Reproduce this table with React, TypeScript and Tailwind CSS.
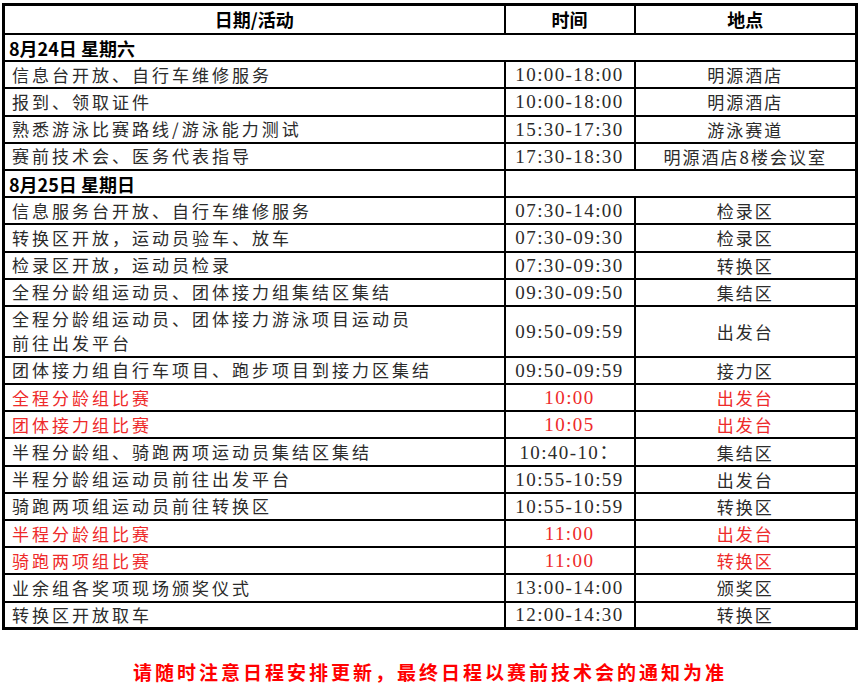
type Row = {
  act: string | string[];
  time?: string;
  place?: string;
  red?: boolean;
  date?: boolean;
  tall?: boolean;
  merge?: "all" | "right";
};

const rows: Row[] = [
  { act: "8月24日 星期六", date: true, merge: "all" },
  { act: "信息台开放、自行车维修服务", time: "10:00-18:00", place: "明源酒店" },
  { act: "报到、领取证件", time: "10:00-18:00", place: "明源酒店" },
  { act: "熟悉游泳比赛路线/游泳能力测试", time: "15:30-17:30", place: "游泳赛道" },
  { act: "赛前技术会、医务代表指导", time: "17:30-18:30", place: "明源酒店8楼会议室" },
  { act: "8月25日 星期日", date: true, merge: "right" },
  { act: "信息服务台开放、自行车维修服务", time: "07:30-14:00", place: "检录区" },
  { act: "转换区开放，运动员验车、放车", time: "07:30-09:30", place: "检录区" },
  { act: "检录区开放，运动员检录", time: "07:30-09:30", place: "转换区" },
  { act: "全程分龄组运动员、团体接力组集结区集结", time: "09:30-09:50", place: "集结区" },
  {
    act: ["全程分龄组运动员、团体接力游泳项目运动员", "前往出发平台"],
    time: "09:50-09:59",
    place: "出发台",
    tall: true,
  },
  { act: "团体接力组自行车项目、跑步项目到接力区集结", time: "09:50-09:59", place: "接力区" },
  { act: "全程分龄组比赛", time: "10:00", place: "出发台", red: true },
  { act: "团体接力组比赛", time: "10:05", place: "出发台", red: true },
  { act: "半程分龄组、骑跑两项运动员集结区集结", time: "10:40-10：", place: "集结区" },
  { act: "半程分龄组运动员前往出发平台", time: "10:55-10:59", place: "出发台" },
  { act: "骑跑两项组运动员前往转换区", time: "10:55-10:59", place: "转换区" },
  { act: "半程分龄组比赛", time: "11:00", place: "出发台", red: true },
  { act: "骑跑两项组比赛", time: "11:00", place: "转换区", red: true },
  { act: "业余组各奖项现场颁奖仪式", time: "13:00-14:00", place: "颁奖区" },
  { act: "转换区开放取车", time: "12:00-14:30", place: "转换区" },
];

const cjk = "font-['Noto_Sans_CJK_SC',sans-serif]";
const num = "font-['Liberation_Serif','Noto_Sans_CJK_SC',serif]";

export default function App() {
  return (
    <div className="w-[860px] h-[693px] bg-white overflow-hidden">
      <div className="pt-[3px] pl-[2px]">
        <table className="table-fixed border-collapse w-[856px] border-[3px] border-black">
          <colgroup>
            <col className="w-[501px]" />
            <col className="w-[130px]" />
            <col />
          </colgroup>
          <thead>
            <tr className="h-[29px]">
              <th className={`border-2 border-black text-[18px] font-bold text-black ${cjk}`}>
                日期/活动
              </th>
              <th className={`border-2 border-black text-[18px] font-bold text-black ${cjk}`}>
                时间
              </th>
              <th className={`border-2 border-black text-[18px] font-bold text-black ${cjk}`}>
                地点
              </th>
            </tr>
          </thead>
          <tbody>
            {rows.map((r, i) => {
              const color = r.red ? "text-[#ee2a2a]" : "text-[#2b2b2b]";
              const h = r.tall ? "h-[51px]" : "h-[27.2px]";
              if (r.date) {
                return (
                  <tr key={i} className={h}>
                    <td
                      colSpan={r.merge === "all" ? 3 : 1}
                      className={`border-2 border-black px-[4px] py-0 text-[18px] font-bold text-black leading-none ${cjk}`}
                    >
                      {r.act}
                    </td>
                    {r.merge === "right" && (
                      <td colSpan={2} className="border-2 border-black" />
                    )}
                  </tr>
                );
              }
              const lines = Array.isArray(r.act) ? r.act : [r.act];
              return (
                <tr key={i} className={h}>
                  <td
                    className={`border-2 border-black pl-[7px] py-0 text-[17px] tracking-[3px] leading-[24px] whitespace-nowrap ${color} ${cjk}`}
                  >
                    {lines.map((l) => (
                      <div key={l}>{l}</div>
                    ))}
                  </td>
                  <td
                    className={`border-2 border-black py-0 text-center text-[19px] tracking-[1.4px] leading-none ${color} ${num}`}
                  >
                    {r.time}
                  </td>
                  <td
                    className={`border-2 border-black py-0 text-center text-[17px] tracking-[2px] leading-none ${color} ${cjk}`}
                  >
                    {r.place}
                  </td>
                </tr>
              );
            })}
          </tbody>
        </table>
      </div>
      <div
        className={`mt-[28px] text-center text-[19px] font-bold tracking-[3px] text-[#f00] ${cjk}`}
      >
        请随时注意日程安排更新，最终日程以赛前技术会的通知为准
      </div>
    </div>
  );
}
